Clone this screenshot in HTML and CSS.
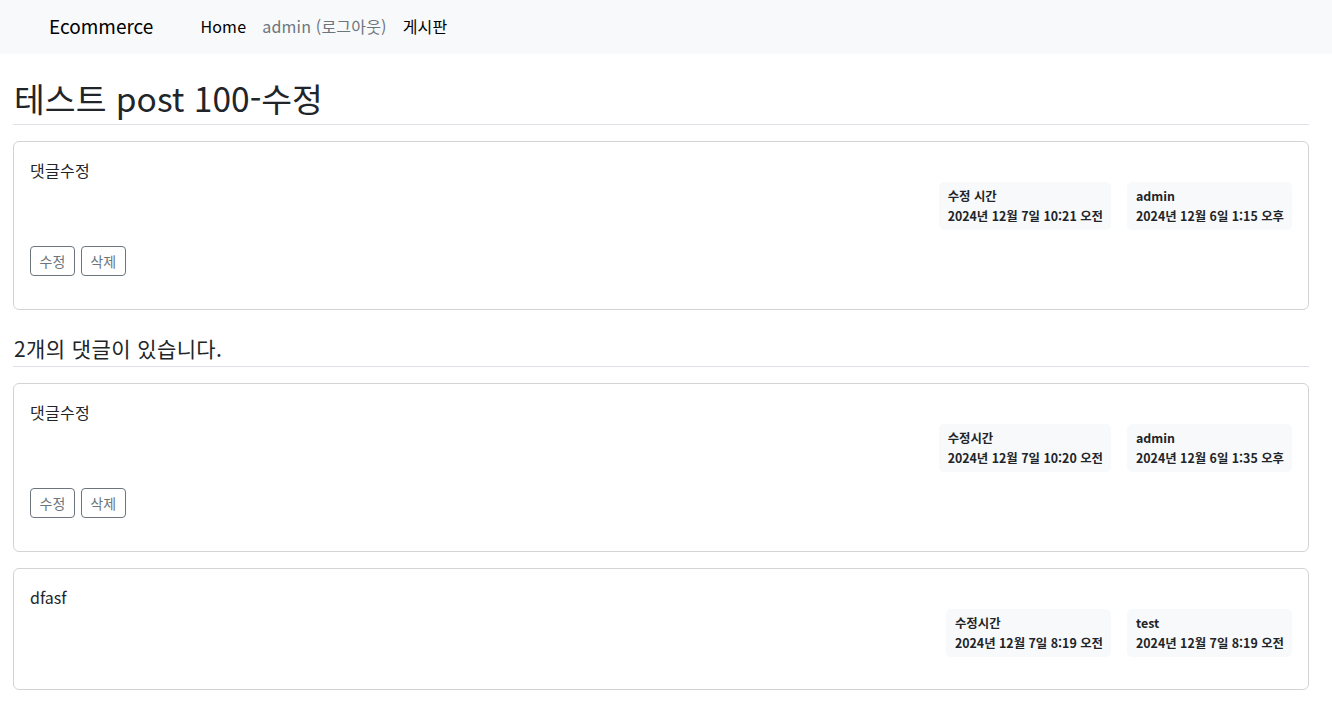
FILE: index.html
```html
<!DOCTYPE html>
<html lang="ko">
<head>
<meta charset="utf-8">
<title>Ecommerce</title>
<link rel="stylesheet" href="styles.css">
</head>
<body>
<nav class="navbar">
  <a class="brand" href="#">Ecommerce</a>
  <ul class="nav">
    <li><a class="nav-link" href="#">Home</a></li>
    <li><a class="nav-link muted" href="#">admin (로그아웃)</a></li>
    <li><a class="nav-link" href="#">게시판</a></li>
  </ul>
</nav>
<main class="container">
  <h1 class="title">테스트 post 100-수정</h1>

  <section class="card">
    <p class="content">댓글수정</p>
    <div class="meta-row">
      <div class="meta"><div>수정 시간</div><div>2024년 12월 7일 10:21 오전</div></div>
      <div class="meta"><div>admin</div><div>2024년 12월 6일 1:15 오후</div></div>
    </div>
    <div class="actions">
      <button class="btn">수정</button>
      <button class="btn">삭제</button>
    </div>
  </section>

  <h2 class="subtitle">2개의 댓글이 있습니다.</h2>

  <section class="card">
    <p class="content">댓글수정</p>
    <div class="meta-row">
      <div class="meta"><div>수정시간</div><div>2024년 12월 7일 10:20 오전</div></div>
      <div class="meta"><div>admin</div><div>2024년 12월 6일 1:35 오후</div></div>
    </div>
    <div class="actions">
      <button class="btn">수정</button>
      <button class="btn">삭제</button>
    </div>
  </section>

  <section class="card">
    <p class="content latin">dfasf</p>
    <div class="meta-row">
      <div class="meta"><div>수정시간</div><div>2024년 12월 7일 8:19 오전</div></div>
      <div class="meta"><div>test</div><div>2024년 12월 7일 8:19 오전</div></div>
    </div>
  </section>
</main>
</body>
</html>
```
FILE: styles.css
```css
* { box-sizing: border-box; }
html, body {
  margin: 0;
  padding: 0;
  background: #fff;
  color: #212529;
  font-family: "Noto Sans CJK KR", "Noto Sans", sans-serif;
  font-size: 16px;
  line-height: 1.5;
}
a { text-decoration: none; color: inherit; }

.navbar {
  height: 54px;
  background: #f8f9fa;
  display: flex;
  align-items: center;
  padding: 0 0 3px 49px;
}
.brand {
  font-size: 19px;
  color: #000;
  margin-right: 47px;
  line-height: 30px;
}
.nav {
  list-style: none;
  margin: 0;
  padding: 0;
  display: flex;
  gap: 16px;
}
.nav-link {
  font-size: 16px;
  color: #000;
  line-height: 24px;
  letter-spacing: 0.2px;
}
.nav-link.muted { color: #6c757d; }

.container {
  padding: 0 23px 0 13px;
}
.title {
  font-size: 33.5px;
  font-weight: 400;
  line-height: 42px;
  margin: 23px 0 16px;
  padding: 0 0 5px 1px;
  border-bottom: 1px solid #dee2e6;
}
.subtitle {
  font-size: 21px;
  font-weight: 400;
  line-height: 24px;
  letter-spacing: 0.4px;
  margin: 26px 0 16px;
  padding: 0 0 6px 1px;
  border-bottom: 1px solid #dee2e6;
}
.card {
  border: 1px solid #d3d3d3;
  border-radius: 6px;
  padding: 16px;
  margin-bottom: 16px;
}
.content {
  margin: 0;
  font-size: 16px;
  letter-spacing: 0.3px;
  line-height: 24px;
}
.content.latin { letter-spacing: 0; }
.meta-row {
  display: flex;
  justify-content: flex-end;
  gap: 16px;
  margin-bottom: 16px;
}
.meta {
  background: #f8f9fa;
  border-radius: 5px;
  padding: 4px 8px 4px 9px;
  font-size: 12.4px;
  font-weight: 700;
  line-height: 20px;
}
.actions {
  display: flex;
  gap: 6px;
  margin-bottom: 17px;
}
.btn {
  font-family: inherit;
  font-size: 14px;
  line-height: 19px;
  color: #6c757d;
  background: #fff;
  border: 1px solid #6c757d;
  border-radius: 4px;
  padding: 4px 8.5px;
  height: 30px;
}
```
